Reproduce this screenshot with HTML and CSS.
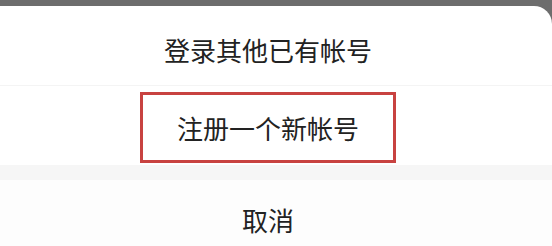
FILE: index.html
```html
<!DOCTYPE html>
<html lang="zh-CN">
<head>
<meta charset="utf-8">
<title>帐号</title>
<link rel="stylesheet" href="styles.css">
</head>
<body>
<div class="sheet">
  <div class="row row-first">登录其他已有帐号</div>
  <div class="row row-second"><div class="highlight">注册一个新帐号</div></div>
  <div class="gap"></div>
  <div class="row row-cancel">取消</div>
</div>
</body>
</html>
```

FILE: styles.css
```css
html, body {
  margin: 0;
  padding: 0;
  overflow: hidden;
}
body {
  background: #6d6d6d;
  width: 552px;
  height: 246px;
  font-family: "Noto Sans CJK SC", "Noto Sans", sans-serif;
  color: #222222;
}
.sheet {
  margin-top: 6px;
  margin-left: -16px;
  width: 568px;
  height: 240px;
  overflow: hidden;
  background: #ffffff;
  border-top-right-radius: 18px;
}
.row {
  display: flex;
  justify-content: center;
  align-items: center;
  font-size: 26px;
  line-height: 1;
}
.row-first {
  box-sizing: border-box;
  height: 80px;
  padding-top: 9px;
  border-bottom: 1px solid #f4f4f4;
}
.row-second {
  box-sizing: border-box;
  height: 79px;
  padding-top: 6px;
  padding-bottom: 2px;
  align-items: stretch;
}
.highlight {
  box-sizing: border-box;
  width: 256px;
  border: 3px solid #c84240;
  display: flex;
  align-items: center;
  justify-content: center;
}
.gap {
  height: 15px;
  background: #f6f6f6;
}
.row-cancel {
  height: 80px;
  background: #fdfdfd;
}
```
